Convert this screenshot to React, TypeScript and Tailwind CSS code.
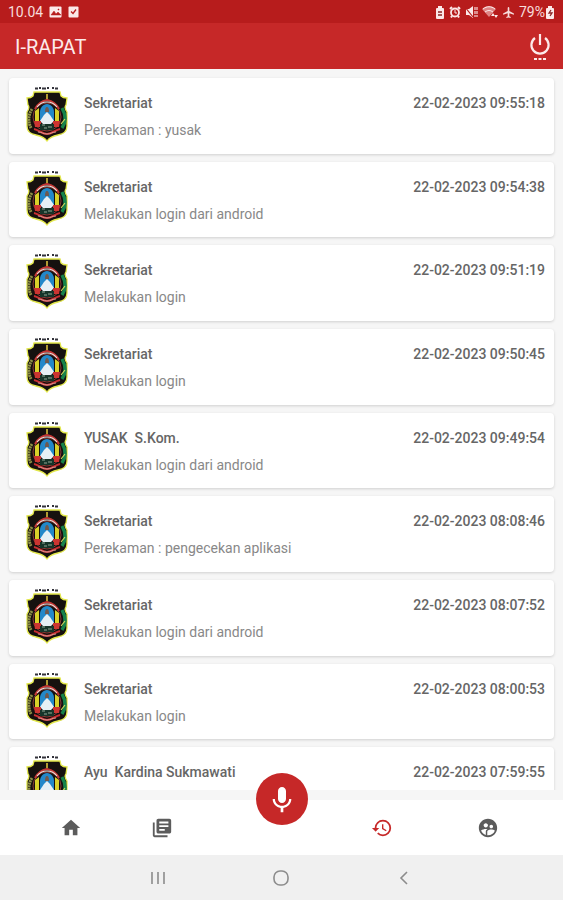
import {
  MdAirplanemodeActive,
  MdHome,
  MdKeyboardVoice,
  MdLibraryBooks,
  MdRestore,
  MdSupervisedUserCircle,
} from "react-icons/md";

interface Activity {
  name: string;
  detail: string;
  time: string;
}

const activities: Activity[] = [
  { name: "Sekretariat", detail: "Perekaman : yusak", time: "22-02-2023 09:55:18" },
  { name: "Sekretariat", detail: "Melakukan login dari android", time: "22-02-2023 09:54:38" },
  { name: "Sekretariat", detail: "Melakukan login", time: "22-02-2023 09:51:19" },
  { name: "Sekretariat", detail: "Melakukan login", time: "22-02-2023 09:50:45" },
  { name: "YUSAK  S.Kom.", detail: "Melakukan login dari android", time: "22-02-2023 09:49:54" },
  { name: "Sekretariat", detail: "Perekaman : pengecekan aplikasi", time: "22-02-2023 08:08:46" },
  { name: "Sekretariat", detail: "Melakukan login dari android", time: "22-02-2023 08:07:52" },
  { name: "Sekretariat", detail: "Melakukan login", time: "22-02-2023 08:00:53" },
  { name: "Ayu  Kardina Sukmawati", detail: "", time: "22-02-2023 07:59:55" },
];

const Crest = () => (
  <svg viewBox="0 0 42 57" className="h-[57px] w-[42px] shrink-0" aria-hidden="true">
    <path d="M9 2.5h3M13 2h2M16 2.5h4M21 2h2M26 2h2M29 2.5h3" stroke="#33333b" strokeWidth="2" />
    <path
      d="M8 6h26l1 4c2 2 4 2 6 2l-1 7c-2 2-1 4 1 7v14c0 5-3 8-9 9-5 1-9 3-11 6-2-3-6-5-11-6-6-1-9-4-9-9V26c2-3 3-5 1-7l-1-7c3 0 5-1 6-2z"
      fill="#16110f"
      stroke="#e3e84b"
      strokeWidth="1.3"
    />
    <path d="M6 23c-4 6-4 13-1 19" stroke="#8f9148" strokeWidth="3" strokeDasharray="2 0.6" fill="none" />
    <path d="M36 22c4 7 4 14 0 20" stroke="#16834a" strokeWidth="3.4" fill="none" />
    <path d="M35 38l4-5" stroke="#d6d75a" strokeWidth="1.2" />
    <circle cx="21" cy="31" r="14" fill="#15110f" stroke="#8a3a35" strokeWidth="1" />
    <path d="M9 23c3-6 7-8 12-9 5 1 9 3 12 9" stroke="#c43735" strokeWidth="2" fill="none" />
    <path d="M11 21c3-4 6-5 10-5s7 1 10 5" stroke="#f0e0dc" strokeWidth="1.2" fill="none" />
    <path d="M20 8h2v5h-2z" fill="#b19a32" />
    <path d="M14 35V26c0-4 3-8 7-8s7 4 7 8v9z" fill="#2388c9" />
    <path d="M19 26c0-4 1-5 2-5s2 1 2 5z" fill="#71594d" />
    <path d="M9 25l4-3v13H9zM29 22l4 3v10h-4z" fill="#d9d129" />
    <path d="M14 35l4-6 3-3 3 3 4 6-3 3h-8z" fill="#e6f0f5" />
    <path d="M8 35h7v6H9zM27 35h7l-1 6h-6z" fill="#cc3531" />
    <path d="M14 38h14v6H14z" fill="#16352a" />
    <path d="M16 39h3M22 41h4M18 42h3" stroke="#90a894" strokeWidth="1" />
    <path d="M8 43c5 1 8 5 13 5s8-4 13-5" stroke="#c72f31" strokeWidth="2.2" fill="none" />
    <path d="M12 46c4 0 5 2 9 2s5-2 9-2" stroke="#ddb9ae" strokeWidth="0.8" fill="none" />
  </svg>
);

const BatteryIcon = ({ mark }: { mark: string }) => (
  <svg viewBox="0 0 10 13" className="h-[13px] w-[10px]" aria-hidden="true">
    <path d="M3 0h4v2h1q1 0 1 1v9q0 1-1 1H2q-1 0-1-1V3q0-1 1-1h1z" fill="#fbe9e9" />
    <path d={mark} stroke="#8c2424" strokeWidth="1.3" fill="none" />
  </svg>
);

const PictureIcon = () => (
  <svg viewBox="0 0 13 12" className="h-3 w-[13px]" aria-hidden="true">
    <rect x="0.5" y="0.5" width="12" height="11" rx="1" fill="#fbe9e9" />
    <path d="M2 9l3-4 2 3 2-2 3 3zM9 3h1v1H9z" fill="#b71c1c" stroke="#b71c1c" strokeWidth="0.5" />
  </svg>
);

const TaskIcon = () => (
  <svg viewBox="0 0 11 12" className="h-3 w-[11px]" aria-hidden="true">
    <rect x="0.5" y="0.5" width="10" height="11" rx="1" fill="#fbe9e9" />
    <path d="M3 5.5l2 2 3-4" stroke="#b71c1c" strokeWidth="1.3" fill="none" />
  </svg>
);

const AlarmIcon = () => (
  <svg viewBox="0 0 12 12" className="size-3" stroke="#fbe9e9" fill="none" aria-hidden="true">
    <circle cx="6" cy="6.5" r="4" strokeWidth="1.8" />
    <path d="M1 3l2-2M11 3L9 1M3 10l-1 1.5M9 10l1 1.5" strokeWidth="2" />
    <path d="M6 4v3h2" strokeWidth="1" />
  </svg>
);

const MuteIcon = () => (
  <svg viewBox="0 0 13 12" className="h-3 w-[13px]" aria-hidden="true">
    <path d="M1 3h3l4-3v12L4 9H1z" fill="#fbe9e9" />
    <path d="M10 1v10M12 1v10" stroke="#fbe9e9" strokeWidth="1.1" strokeDasharray="3 1" />
    <path d="M0 1l8 10" stroke="#b71c1c" strokeWidth="1.2" />
  </svg>
);

const WifiIcon = () => (
  <svg viewBox="0 0 16 13" className="h-[13px] w-4" aria-hidden="true">
    <path d="M0 3c4-4 10-4 14 0L7 11z" fill="#df8585" />
    <path d="M1 3c4-3 8-3 12 0M3 6c3-2 5-2 8 0" stroke="#fbe9e9" strokeWidth="1" fill="none" />
    <path d="M9 10l2-3 2 3zM12 9l2 3 2-3z" fill="#fbe9e9" />
  </svg>
);

const StatusBar = () => (
  <div className="flex h-[23px] items-center justify-between bg-[#b71c1c] px-2 pt-px text-sm text-[#f7dcdc]">
    <div className="flex items-center gap-1.5">
      <span>10.04</span>
      <PictureIcon />
      <TaskIcon />
    </div>
    <div className="flex items-center gap-1">
      <BatteryIcon mark="M3 6h4M3 9h4" />
      <AlarmIcon />
      <MuteIcon />
      <WifiIcon />
      <MdAirplanemodeActive className="size-[13px]" />
      <span className="flex items-center">
        79%
        <BatteryIcon mark="M6 4L4 7h3L5 10" />
      </span>
    </div>
  </div>
);

const AppBar = () => (
  <header className="flex h-[46px] items-center justify-between bg-[#c62828] pl-[15px] pr-3 pt-px text-[#fdeaea]">
    <h1 className="text-xl">I-RAPAT</h1>
    <button type="button" aria-label="Keluar">
      <svg viewBox="0 0 22 28" className="h-7 w-[22px]" fill="none" stroke="currentColor" aria-hidden="true">
        <path d="M11 1v11M6 5a8.6 8.6 0 1 0 10 0" strokeWidth="2.2" />
        <path d="M5 26h3M9.5 26h3M14 26h3" strokeWidth="2.2" />
      </svg>
    </button>
  </header>
);

const ActivityCard = ({ activity }: { activity: Activity }) => (
  <li className="flex gap-4 rounded-sm bg-white pl-[17px] pr-[9px] pt-2 shadow-[0_1px_3px_rgba(0,0,0,0.16)]">
    <Crest />
    <div className="min-w-0 flex-1 pt-[7px]">
      <div className="flex justify-between text-sm font-medium leading-5 text-[#666666]">
        <h2 className="whitespace-pre">{activity.name}</h2>
        <time>{activity.time}</time>
      </div>
      <p className="mt-[7px] text-sm leading-5 text-[#888888]">{activity.detail}</p>
    </div>
  </li>
);

const BottomNav = () => (
  <nav className="relative grid h-[55px] shrink-0 grid-cols-2 bg-white text-[#5c5c5c]">
    <div className="flex items-center justify-center gap-[69px] pr-12">
      <button type="button" aria-label="Beranda">
        <MdHome className="size-[22px]" />
      </button>
      <button type="button" aria-label="Notulen">
        <MdLibraryBooks className="size-[22px]" />
      </button>
    </div>
    <div className="flex items-center justify-center gap-[84px] pl-[26px]">
      <button type="button" aria-label="Riwayat" className="text-[#c62828]">
        <MdRestore className="size-[22px]" />
      </button>
      <button type="button" aria-label="Pengguna">
        <MdSupervisedUserCircle className="size-[22px]" />
      </button>
    </div>
    <button
      type="button"
      aria-label="Rekam"
      className="absolute -top-[27px] left-1/2 flex size-[52px] -translate-x-1/2 items-center justify-center rounded-full bg-[#c62828] text-white"
    >
      <MdKeyboardVoice className="size-8" />
    </button>
  </nav>
);

const SystemNav = () => (
  <div className="flex h-[45px] shrink-0 items-center justify-center gap-[105px] bg-[#f0f0f0] pr-0.5 text-[#8c8c8c]">
    <button type="button" aria-label="Aplikasi terbaru">
      <svg viewBox="0 0 18 18" className="size-[18px]" stroke="currentColor" strokeWidth="1.6">
        <path d="M3 3v12M9 3v12M15 3v12" />
      </svg>
    </button>
    <button type="button" aria-label="Layar utama">
      <svg viewBox="0 0 18 18" className="size-[18px]" fill="none" stroke="currentColor" strokeWidth="1.6">
        <rect x="2" y="2" width="14" height="14" rx="6" />
      </svg>
    </button>
    <button type="button" aria-label="Kembali">
      <svg viewBox="0 0 18 18" className="size-[18px]" fill="none" stroke="currentColor" strokeWidth="1.6">
        <path d="M12 3L6 9l6 6" />
      </svg>
    </button>
  </div>
);

export default function App() {
  return (
    <div className="flex h-screen flex-col bg-[#f6f6f6] font-['Roboto',sans-serif]">
      <StatusBar />
      <AppBar />
      <main className="mb-2.5 min-h-0 flex-1 overflow-hidden px-[9px] pt-[9px]">
        <ul className="grid min-h-[745px] auto-rows-fr gap-2">
          {activities.map((activity) => (
            <ActivityCard key={activity.time} activity={activity} />
          ))}
        </ul>
      </main>
      <BottomNav />
      <SystemNav />
    </div>
  );
}
